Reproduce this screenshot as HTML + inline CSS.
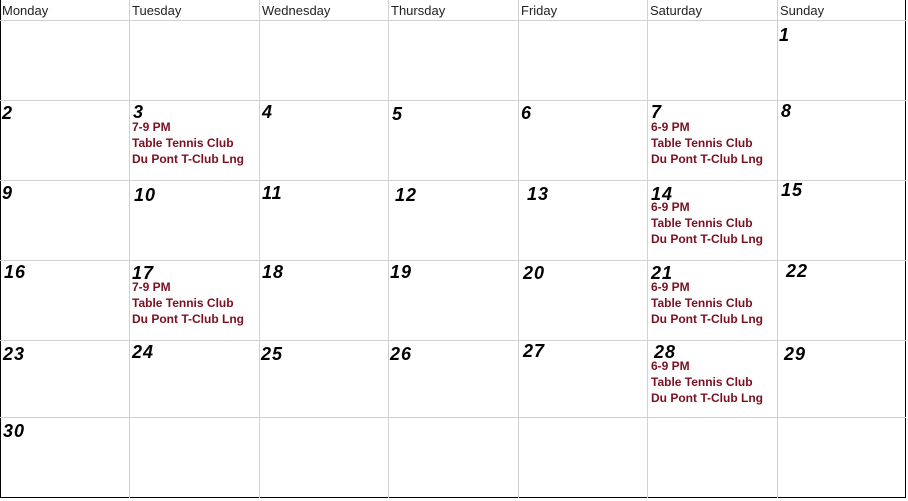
<!DOCTYPE html>
<html><head><meta charset="utf-8"><style>
body{margin:0;width:908px;height:501px;background:#fff;position:relative;overflow:hidden;font-family:"Liberation Sans",sans-serif}
.v{position:absolute;top:0;width:1px;height:498px;background:#d0d0d0}
.h{position:absolute;left:0;width:906px;height:1px;background:#d0d0d0}
.hd{position:absolute;top:3px;font-size:13px;color:#222}
.n{position:absolute;font-size:18px;line-height:18px;font-weight:bold;font-style:italic;color:#000;letter-spacing:1px}
.e{position:absolute;font-size:12px;line-height:16px;font-weight:bold;color:#7a1020;white-space:nowrap}
</style></head><body>
<div style="position:absolute;left:0;top:0;width:904px;height:497px;border:1px solid #000;border-top:none"></div>
<div class="v" style="left:129px"></div><div class="v" style="left:259px"></div><div class="v" style="left:388px"></div><div class="v" style="left:518px"></div><div class="v" style="left:647px"></div><div class="v" style="left:777px"></div>
<div class="h" style="top:20px"></div><div class="h" style="top:100px"></div><div class="h" style="top:180px"></div><div class="h" style="top:260px"></div><div class="h" style="top:340px"></div><div class="h" style="top:417px"></div>
<div class="hd" style="left:2px">Monday</div><div class="hd" style="left:132px">Tuesday</div><div class="hd" style="left:262px">Wednesday</div><div class="hd" style="left:391px">Thursday</div><div class="hd" style="left:521px">Friday</div><div class="hd" style="left:650px">Saturday</div><div class="hd" style="left:780px">Sunday</div>
<div class="n" style="left:779px;top:26px">1</div>
<div class="n" style="left:2px;top:104px">2</div><div class="n" style="left:133px;top:103px">3</div><div class="n" style="left:262px;top:103px">4</div><div class="n" style="left:392px;top:105px">5</div><div class="n" style="left:521px;top:104px">6</div><div class="n" style="left:651px;top:103px">7</div><div class="n" style="left:781px;top:102px">8</div>
<div class="n" style="left:2px;top:184px">9</div><div class="n" style="left:134px;top:186px">10</div><div class="n" style="left:262px;top:184px">11</div><div class="n" style="left:395px;top:186px">12</div><div class="n" style="left:527px;top:185px">13</div><div class="n" style="left:651px;top:185px">14</div><div class="n" style="left:781px;top:181px">15</div>
<div class="n" style="left:4px;top:263px">16</div><div class="n" style="left:132px;top:264px">17</div><div class="n" style="left:262px;top:263px">18</div><div class="n" style="left:390px;top:263px">19</div><div class="n" style="left:523px;top:264px">20</div><div class="n" style="left:651px;top:264px">21</div><div class="n" style="left:786px;top:262px">22</div>
<div class="n" style="left:3px;top:345px">23</div><div class="n" style="left:132px;top:343px">24</div><div class="n" style="left:261px;top:345px">25</div><div class="n" style="left:390px;top:345px">26</div><div class="n" style="left:523px;top:342px">27</div><div class="n" style="left:654px;top:343px">28</div><div class="n" style="left:784px;top:345px">29</div>
<div class="n" style="left:3px;top:422px">30</div>
<div class="e" style="left:132px;top:119px">7-9 PM<br>Table Tennis Club<br>Du Pont T-Club Lng</div>
<div class="e" style="left:651px;top:119px">6-9 PM<br>Table Tennis Club<br>Du Pont T-Club Lng</div>
<div class="e" style="left:651px;top:199px">6-9 PM<br>Table Tennis Club<br>Du Pont T-Club Lng</div>
<div class="e" style="left:132px;top:279px">7-9 PM<br>Table Tennis Club<br>Du Pont T-Club Lng</div>
<div class="e" style="left:651px;top:279px">6-9 PM<br>Table Tennis Club<br>Du Pont T-Club Lng</div>
<div class="e" style="left:651px;top:358px">6-9 PM<br>Table Tennis Club<br>Du Pont T-Club Lng</div>
</body></html>
